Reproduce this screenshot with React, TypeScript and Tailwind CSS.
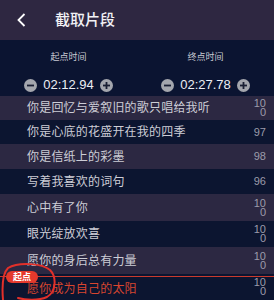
const rows: { text: string; score: string; light: boolean; h: string }[] = [
  { text: "你是回忆与爱叙旧的歌只唱给我听", score: "100", light: true, h: "h-[24px]" },
  { text: "你是心底的花盛开在我的四季", score: "97", light: false, h: "h-[24px]" },
  { text: "你是信纸上的彩墨", score: "98", light: true, h: "h-[25px]" },
  { text: "写着我喜欢的词句", score: "96", light: false, h: "h-[25px]" },
  { text: "心中有了你", score: "100", light: true, h: "h-[27px]" },
  { text: "眼光绽放欢喜", score: "100", light: false, h: "h-[26px]" },
  { text: "愿你的身后总有力量", score: "100", light: true, h: "h-[27px]" },
];

function RoundBtn({ plus }: { plus?: boolean }) {
  return (
    <svg width="13" height="13" viewBox="0 0 13 13" className="shrink-0">
      <circle cx="6.5" cy="6.5" r="6.5" fill="#a4a6ad" />
      <rect x="3" y="5.6" width="7" height="1.8" fill="#1a1f33" />
      {plus && <rect x="5.6" y="3" width="1.8" height="7" fill="#1a1f33" />}
    </svg>
  );
}

function TimeBox({ label, value }: { label: string; value: string }) {
  return (
    <div className="flex flex-1 flex-col items-center">
      <span className="text-[9px] leading-[12px] text-[#c9cad3]">{label}</span>
      <div className="mt-[15px] flex items-center gap-[6px]">
        <RoundBtn />
        <span className="text-[13px] leading-[14px] text-[#eceef4]">{value}</span>
        <RoundBtn plus />
      </div>
    </div>
  );
}

function Score({ value, red }: { value: string; red?: boolean }) {
  return (
    <span
      className={`w-[13px] break-all text-right text-[11px] leading-[9px] ${red ? "text-[#9c9cab]" : "text-[#9c9cab]"}`}
    >
      {value}
    </span>
  );
}

export default function App() {
  return (
    <div className="h-[300px] w-[274px] overflow-hidden bg-[#0b1431] font-['Liberation_Sans','Noto_Sans_CJK_SC',sans-serif]">
      <header className="flex h-[40px] items-center bg-[#2e2741] pl-[17px]">
        <svg width="9" height="14" viewBox="0 0 9 14" className="shrink-0">
          <polyline points="7.5,1 1.5,7 7.5,13" fill="none" stroke="#ffffff" strokeWidth="1.8" />
        </svg>
        <h1 className="ml-[29px] text-[15px] font-medium text-[#f2f2f5]">截取片段</h1>
      </header>

      <section className="flex h-[56px] pt-[11px]">
        <TimeBox label="起点时间" value="02:12.94" />
        <TimeBox label="终点时间" value="02:27.78" />
      </section>

      <ul>
        {rows.map((r) => (
          <li
            key={r.text}
            className={`flex ${r.h} items-center justify-between pl-[27px] pr-[8px] ${r.light ? "bg-[#2c2842]" : "bg-[#0c1530]"}`}
          >
            <span className="text-[12px] tracking-[0.2px] text-[#cdcdd6]">{r.text}</span>
            <Score value={r.score} />
          </li>
        ))}
        <li className="relative flex h-[26px] items-center justify-between bg-[#0c1530] pl-[27px] pr-[8px]">
          <div className="absolute left-0 right-0 top-[2px] h-px bg-[#c93a2e]" />
          <span className="pt-[3px] text-[12px] tracking-[0.2px] text-[#d8452f]">愿你成为自己的太阳</span>
          <Score value="100" red />
          <span className="absolute left-[6px] top-[-3px] flex h-[12px] w-[32px] items-center justify-center rounded-[6px] bg-[#e5392c] text-[9px] font-bold leading-none text-white">
            起点
          </span>
          <svg
            width="60"
            height="40"
            viewBox="0 260 60 40"
            className="absolute left-0 top-[-14px]"
          >
            <path
              d="M 3 300 C 2 288, 2 274, 8 268 C 18 262, 42 263, 50 270 C 57 277, 56 292, 47 297 C 38 301, 25 300, 18 298"
              fill="none"
              stroke="#e2302a"
              strokeWidth="2"
              strokeLinecap="round"
            />
          </svg>
        </li>
      </ul>
    </div>
  );
}
